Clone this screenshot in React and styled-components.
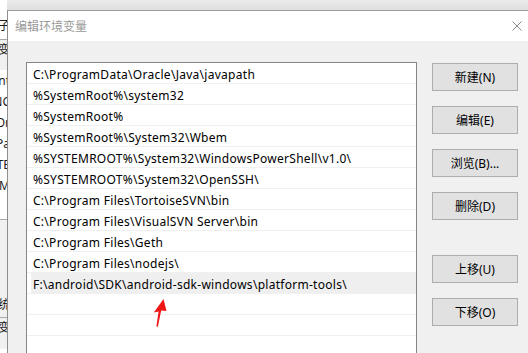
import styled, { createGlobalStyle } from "styled-components";

const GlobalStyle = createGlobalStyle`
    html, body {
        margin: 0;
        padding: 0;
        background: #ffffff;
    }
    body {
        font-family: "Noto Sans", "Noto Sans CJK SC", sans-serif;
        font-size: 12px;
        color: #000;
    }
`

const paths = [
    "C:\\ProgramData\\Oracle\\Java\\javapath",
    "%SystemRoot%\\system32",
    "%SystemRoot%",
    "%SystemRoot%\\System32\\Wbem",
    "%SYSTEMROOT%\\System32\\WindowsPowerShell\\v1.0\\",
    "%SYSTEMROOT%\\System32\\OpenSSH\\",
    "C:\\Program Files\\TortoiseSVN\\bin",
    "C:\\Program Files\\VisualSVN Server\\bin",
    "C:\\Program Files\\Geth",
    "C:\\Program Files\\nodejs\\",
    "F:\\android\\SDK\\android-sdk-windows\\platform-tools\\",
    "",
    "",
    "",
];

const buttons = [
    { label: "新建(N)" },
    { label: "编辑(E)" },
    { label: "浏览(B)..." },
    { label: "删除(D)" },
    { label: "上移(U)", spaced: true },
    { label: "下移(O)" },
];

// what peeks out of the window behind the dialog
const backItems = [
    { text: "子", h: 40, pad: 16, bg: "#ffffff", line: true },
    { text: "变", h: 30, pad: 0, bg: "#f0f0f0" },
    { text: "int", h: 21, bg: "#ffffff" },
    { text: "NC", h: 21, bg: "#ffffff" },
    { text: "Or", h: 21, bg: "#ffffff" },
    { text: "Pa", h: 21, bg: "#ffffff" },
    { text: "TE", h: 21, bg: "#ffffff" },
    { text: "TM", h: 21, bg: "#ffffff" },
    { text: "", h: 24, bg: "#ffffff", line: true },
    { text: "", h: 71, bg: "#f0f0f0" },
    { text: "统", h: 27, bg: "#f0f0f0", line: true },
    { text: "变", h: 31, pad: 0, bg: "#f0f0f0" },
];

export default function App(){
    return (
        <Screen>
            <GlobalStyle />
            <BackWindow>
                {backItems.map((item, i) => (
                    <BackItem key={i} $h={item.h} $bg={item.bg} $line={item.line} $pad={item.pad}>
                        <span>{item.text}</span>
                    </BackItem>
                ))}
            </BackWindow>
            <Main>
                <TopBand />
                <Dialog>
                    <TitleBar>
                        <Title>编辑环境变量</Title>
                        <Close viewBox="0 0 10 10">
                            <path d="M0.5 0.5 L9.5 9.5 M9.5 0.5 L0.5 9.5" stroke="#8a8a8a" strokeWidth="1" fill="none" />
                        </Close>
                    </TitleBar>
                    <Body>
                        <List>
                            {paths.map((p, i) => (
                                <Row key={i}>
                                    <RowText $selected={i === 10}>{p}</RowText>
                                </Row>
                            ))}
                        </List>
                        <Buttons>
                            {buttons.map((b) => (
                                <Button key={b.label} $spaced={b.spaced}>{b.label}</Button>
                            ))}
                        </Buttons>
                    </Body>
                </Dialog>
            </Main>
            <Arrow viewBox="0 0 20 35">
                <polygon points="13.5,4 16.5,16 11.2,15.4 7.8,32 6.4,31.2 8.6,16.4 3.8,17.6" fill="#f01414" />
            </Arrow>
        </Screen>
    );
}

const Screen = styled.div `
    position: relative;
    width: 528px;
    height: 353px;
    overflow: hidden;
    display: flex;
`

const BackWindow = styled.div `
    width: 7px;
    flex-shrink: 0;
    overflow: hidden;
    display: flex;
    flex-direction: column;
`

const BackItem = styled.div `
    box-sizing: border-box;
    height: ${p => p.$h}px;
    flex-shrink: 0;
    background: ${p => p.$bg};
    border-bottom: ${p => p.$line ? "1px solid #a8a8a8" : "none"};
    display: flex;
    align-items: ${p => p.$pad !== undefined ? "flex-start" : "center"};
    padding-top: ${p => p.$pad || 0}px;
    justify-content: flex-end;
    white-space: nowrap;
    font-size: 12px;
    color: #1a1a1a;

    span {
        margin-right: -3px;
    }
`

const Main = styled.div `
    flex: 1;
    display: flex;
    flex-direction: column;
    min-width: 0;
`

const TopBand = styled.div `
    height: 10px;
    flex-shrink: 0;
    background: linear-gradient(#ececec, #dedede);
`

const Dialog = styled.div `
    flex: 1;
    display: flex;
    flex-direction: column;
    border-top: 1px solid #9c9c9c;
    border-left: 1px solid #8e8e8e;
    background: #f0f0f0;
`

const TitleBar = styled.div `
    height: 30px;
    flex-shrink: 0;
    background: #ffffff;
    display: flex;
    align-items: center;
    justify-content: space-between;
    padding: 0 6px 0 7px;
`

const Title = styled.span `
    font-size: 12px;
    color: #9a9a9a;
`

const Close = styled.svg `
    width: 10px;
    height: 10px;
    margin-top: -1px;
`

const Body = styled.div `
    flex: 1;
    display: flex;
    padding: 21px 10px 0 18px;
    gap: 15px;
    overflow: hidden;
`

const List = styled.div `
    box-sizing: border-box;
    width: 391px;
    height: 320px;
    flex-shrink: 0;
    background: #ffffff;
    border: 1px solid #858585;
    display: flex;
    flex-direction: column;
`

const Row = styled.div `
    box-sizing: border-box;
    height: 21px;
    flex-shrink: 0;
    border-bottom: 1px solid #f0f0f0;
    display: flex;
`

const RowText = styled.div `
    flex: 1;
    height: 20px;
    margin-left: 4px;
    padding-left: 2px;
    line-height: 23px;
    white-space: nowrap;
    font-size: 12px;
    letter-spacing: 0.28px;
    color: #000;
    background: ${p => p.$selected ? "#efefef" : "transparent"};
`

const Buttons = styled.div `
    display: flex;
    flex-direction: column;
    gap: 15px;
    margin-top: 1px;
`

const Button = styled.div `
    box-sizing: border-box;
    width: 86px;
    height: 28px;
    margin-top: ${p => p.$spaced ? "20px" : "0"};
    background: #e1e1e1;
    border: 1px solid #adadad;
    display: flex;
    align-items: center;
    justify-content: center;
    font-size: 12px;
    color: #000;
`

const Arrow = styled.svg `
    position: absolute;
    left: 150px;
    top: 295px;
    width: 20px;
    height: 35px;
`
